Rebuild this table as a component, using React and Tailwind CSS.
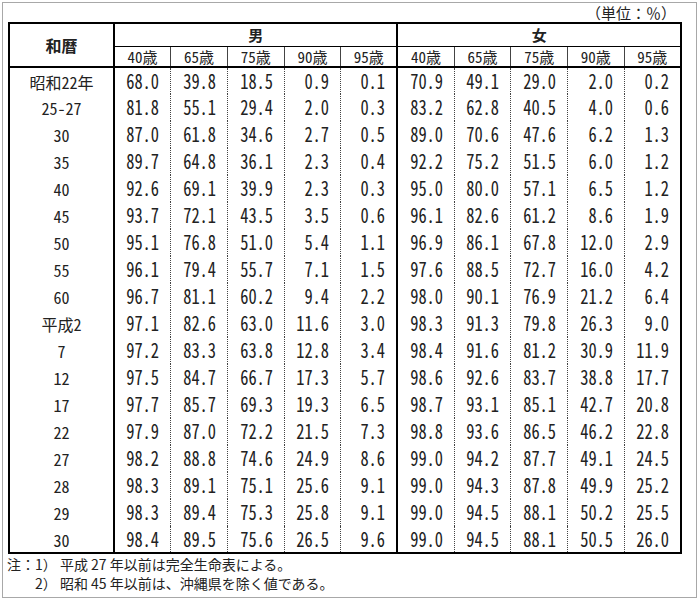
import React from 'react';

const rows = [
  ['昭和22年', ['68.0', '39.8', '18.5', '0.9', '0.1'], ['70.9', '49.1', '29.0', '2.0', '0.2']],
  ['25-27', ['81.8', '55.1', '29.4', '2.0', '0.3'], ['83.2', '62.8', '40.5', '4.0', '0.6']],
  ['30', ['87.0', '61.8', '34.6', '2.7', '0.5'], ['89.0', '70.6', '47.6', '6.2', '1.3']],
  ['35', ['89.7', '64.8', '36.1', '2.3', '0.4'], ['92.2', '75.2', '51.5', '6.0', '1.2']],
  ['40', ['92.6', '69.1', '39.9', '2.3', '0.3'], ['95.0', '80.0', '57.1', '6.5', '1.2']],
  ['45', ['93.7', '72.1', '43.5', '3.5', '0.6'], ['96.1', '82.6', '61.2', '8.6', '1.9']],
  ['50', ['95.1', '76.8', '51.0', '5.4', '1.1'], ['96.9', '86.1', '67.8', '12.0', '2.9']],
  ['55', ['96.1', '79.4', '55.7', '7.1', '1.5'], ['97.6', '88.5', '72.7', '16.0', '4.2']],
  ['60', ['96.7', '81.1', '60.2', '9.4', '2.2'], ['98.0', '90.1', '76.9', '21.2', '6.4']],
  ['平成2', ['97.1', '82.6', '63.0', '11.6', '3.0'], ['98.3', '91.3', '79.8', '26.3', '9.0']],
  ['7', ['97.2', '83.3', '63.8', '12.8', '3.4'], ['98.4', '91.6', '81.2', '30.9', '11.9']],
  ['12', ['97.5', '84.7', '66.7', '17.3', '5.7'], ['98.6', '92.6', '83.7', '38.8', '17.7']],
  ['17', ['97.7', '85.7', '69.3', '19.3', '6.5'], ['98.7', '93.1', '85.1', '42.7', '20.8']],
  ['22', ['97.9', '87.0', '72.2', '21.5', '7.3'], ['98.8', '93.6', '86.5', '46.2', '22.8']],
  ['27', ['98.2', '88.8', '74.6', '24.9', '8.6'], ['99.0', '94.2', '87.7', '49.1', '24.5']],
  ['28', ['98.3', '89.1', '75.1', '25.6', '9.1'], ['99.0', '94.3', '87.8', '49.9', '25.2']],
  ['29', ['98.3', '89.4', '75.3', '25.8', '9.1'], ['99.0', '94.5', '88.1', '50.2', '25.5']],
  ['30', ['98.4', '89.5', '75.6', '26.5', '9.6'], ['99.0', '94.5', '88.1', '50.5', '26.0']],
];

const ages = ['40歳', '65歳', '75歳', '90歳', '95歳'];

// left border of a data column: thick at the start of 女, dotted elsewhere
const sep = (group, i) => {
  if (i > 0) return 'border-l border-dotted border-[#444]';
  return group === 1 ? 'border-l-2 border-solid border-black' : '';
};

// half-width (hwid) digits give the fixed pitch of the old gothic font
const Num = ({ value, className }) => (
  <td className={`${className} pr-[11px] pt-px text-right align-middle`}>
    <span className="inline-block origin-right scale-x-[0.82] text-[20px] leading-[20px] text-[#222] [font-feature-settings:'hwid']">
      {value}
    </span>
  </td>
);

export default function App() {
  return (
    <div className="w-[700px] h-[600px] bg-white p-[2px] font-['Noto_Sans_CJK_JP',sans-serif] text-[#222]">
      <div className="w-[695px] h-[596px] border border-[#a8a8a8]">
        <div className="h-[19px] pr-[20px] text-right text-[15px] leading-[19px]">（単位：％）</div>

        <table className="ml-[5px] w-[674px] table-fixed border-collapse border-2 border-black">
          <colgroup>
            <col className="w-[105px]" />
            {Array.from({ length: 10 }).map((_, i) => (
              <col key={i} />
            ))}
          </colgroup>
          <thead>
            <tr className="h-[23px]">
              <th rowSpan={2} className="border-r-2 border-b-2 border-black text-[16px] font-bold">
                和暦
              </th>
              <th colSpan={5} className="border-b border-black text-[15px] font-bold leading-none">
                男
              </th>
              <th colSpan={5} className="border-l-2 border-b border-black text-[15px] font-bold leading-none">
                女
              </th>
            </tr>
            <tr className="h-[21px]">
              {[0, 1].map((g) =>
                ages.map((a, i) => (
                  <th
                    key={`${g}-${a}`}
                    className={`${sep(g, i)} border-b-2 border-b-black border-solid align-bottom pb-[2px] text-[15px] font-normal leading-none [font-feature-settings:'hwid']`}
                  >
                    {a}
                  </th>
                ))
              )}
            </tr>
          </thead>
          <tbody>
            {rows.map(([label, male, female], r) => (
              <tr key={r} className="h-[27px]">
                <td className="border-r-2 border-black pt-px text-center text-[16px] leading-none [font-feature-settings:'hwid']">
                  {label}
                </td>
                {male.map((v, i) => (
                  <Num key={`m${i}`} value={v} className={sep(0, i)} />
                ))}
                {female.map((v, i) => (
                  <Num key={`f${i}`} value={v} className={sep(1, i)} />
                ))}
              </tr>
            ))}
          </tbody>
        </table>

        <div className="flex pl-[4px] pt-px text-[14px] leading-[19px]">
          <span>注：</span>
          <div>
            <div>1） 平成 27 年以前は完全生命表による。</div>
            <div>2） 昭和 45 年以前は、沖縄県を除く値である。</div>
          </div>
        </div>
      </div>
    </div>
  );
}
